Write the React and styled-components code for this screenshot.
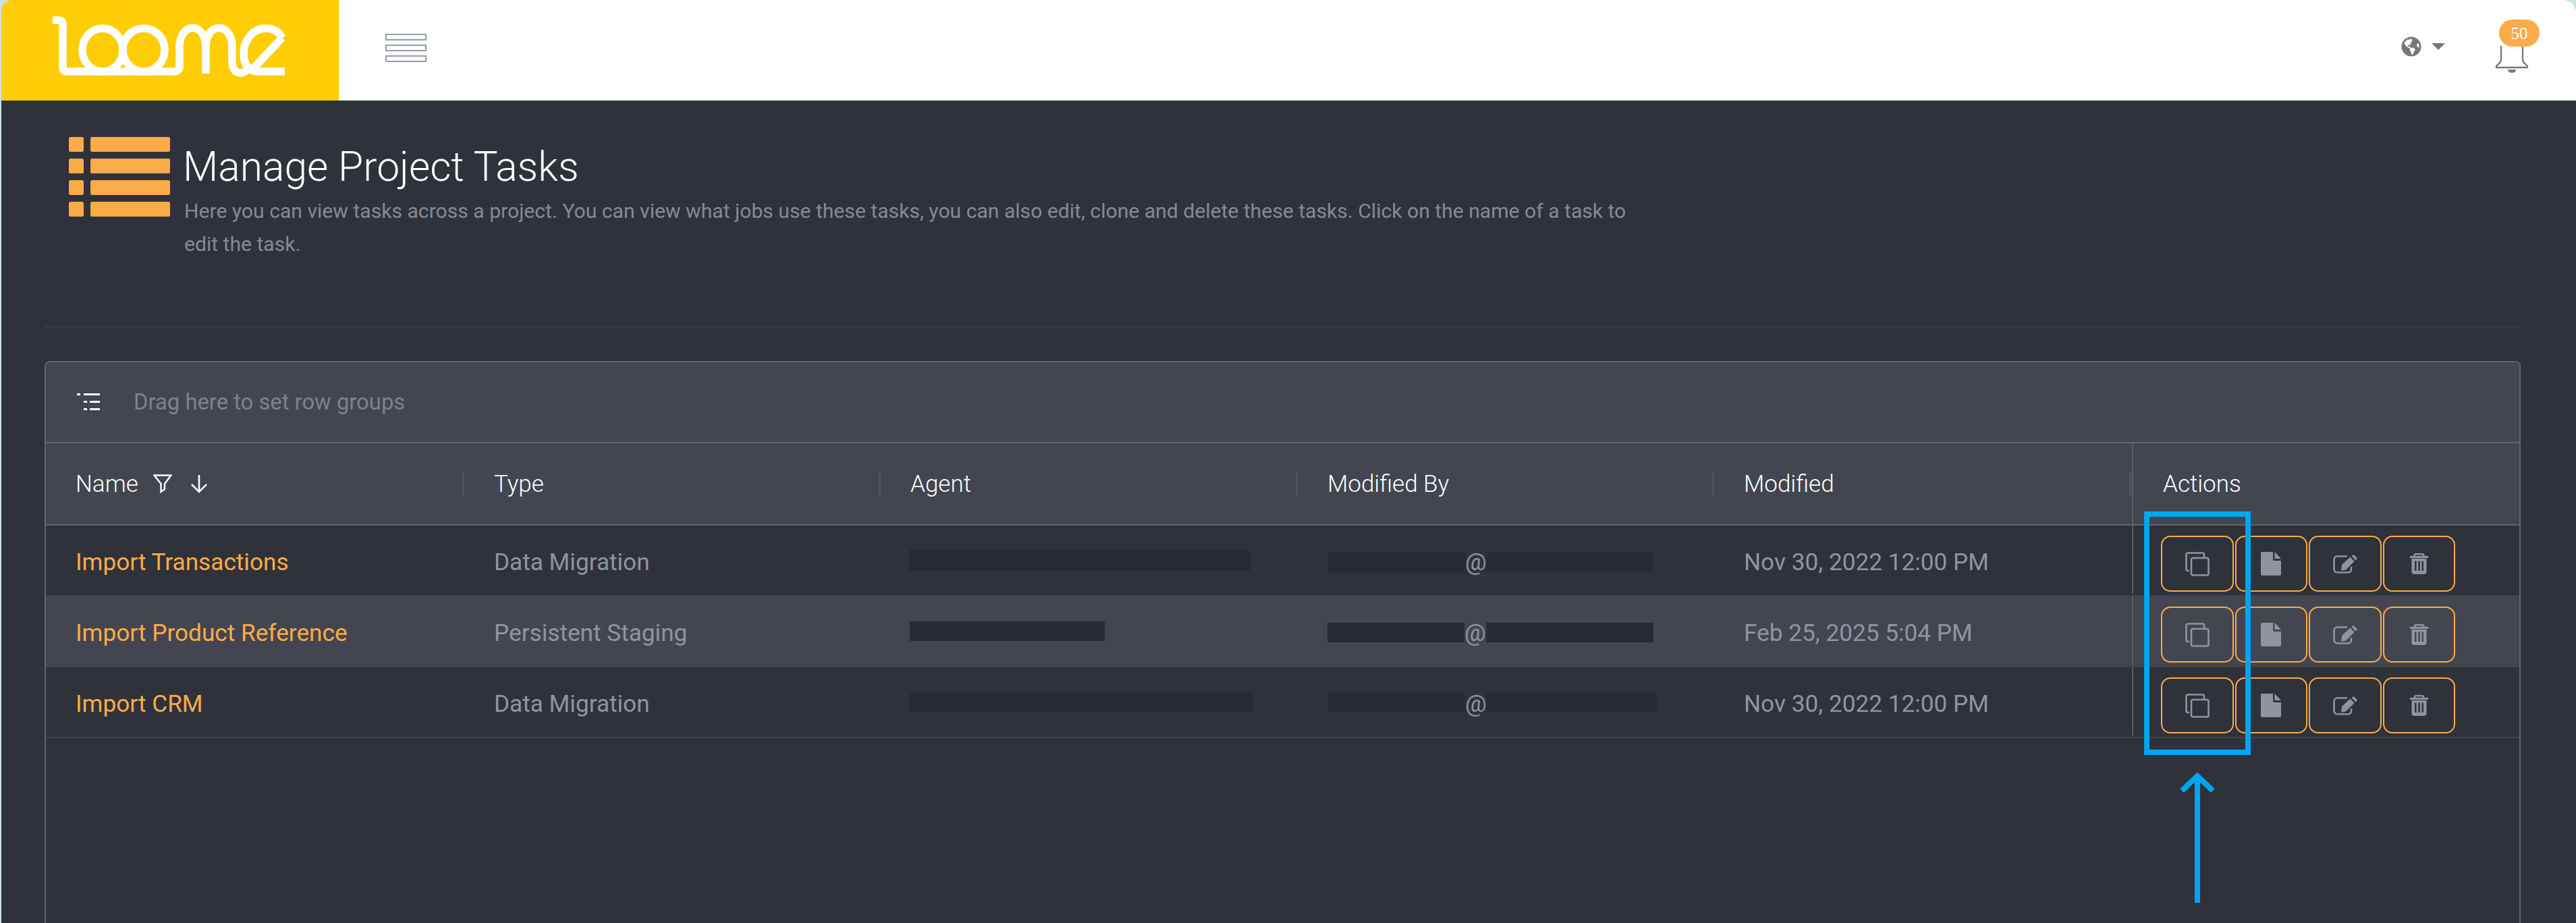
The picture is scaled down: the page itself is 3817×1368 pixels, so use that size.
import React from 'react'
import styled, { createGlobalStyle } from 'styled-components'
import { FaGlobeAmericas } from 'react-icons/fa'

const orange = '#fbab47'
const iconGrey = '#8f959e'
const dark = '#2f323b'
const light = '#434650'
const redact = '#282b33'

const GlobalStyle = createGlobalStyle`
  html, body {
    margin: 0;
    padding: 0;
    background: #c9e2ea;
  }
  * {
    box-sizing: border-box;
  }
`

const Page = styled.div`
  position: relative;
  width: 3817px;
  height: 1368px;
  overflow: hidden;
  padding-left: 2px;
  font-family: Roboto, 'Liberation Sans', sans-serif;
`

const Shell = styled.div`
  height: 100%;
  background: ${dark};
  border-radius: 16px 16px 0 0;
  overflow: hidden;
`

const TopBar = styled.header`
  display: flex;
  align-items: center;
  height: 149px;
  background: #fff;
`

const LogoBox = styled.div`
  display: flex;
  align-items: flex-start;
  width: 500px;
  height: 100%;
  padding: 24px 0 0 75px;
  background: #ffcd05;
`

const MenuButton = styled.div`
  display: flex;
  flex-direction: column;
  gap: 6px;
  margin: -7px 0 0 69px;
`

const MenuBar = styled.span`
  display: block;
  width: 61px;
  height: 10px;
  border: 2px solid #959ca6;
  background: #fff;
`

const TopActions = styled.div`
  display: flex;
  align-items: center;
  margin-left: auto;
  padding-right: 71px;
`

const LangMenu = styled.div`
  display: flex;
  align-items: center;
  gap: 15px;
  margin-top: -11px;
  color: #777;
  font-size: 30px;
`

const Caret = styled.span`
  width: 0;
  height: 0;
  border-left: 10px solid transparent;
  border-right: 10px solid transparent;
  border-top: 10px solid #777;
`

const Bell = styled.div`
  position: relative;
  width: 48px;
  height: 50px;
  margin: 21px 0 0 75px;
`

const Badge = styled.span`
  position: absolute;
  left: 5px;
  top: -31px;
  width: 60px;
  height: 40px;
  border-radius: 20px;
  background: ${orange};
  color: #fff;
  font-family: 'Liberation Serif', serif;
  font-size: 25px;
  line-height: 41px;
  text-align: center;
`

const Content = styled.main`
  padding: 54px 82px 0 64px;
`

const PageHead = styled.div`
  display: flex;
  gap: 21px;
  padding: 0 0 0 36px;
  height: 282px;
  border-bottom: 2px solid #3a3d49;
`

const HeadText = styled.div`
  padding-top: 10px;
`

const Title = styled.h1`
  margin: 0 0 0 -2px;
  color: #fff;
  font-size: 60.5px;
  font-weight: 300;
  line-height: 70px;
`

const Description = styled.p`
  width: 2170px;
  margin: 5px 0 0;
  color: #858a93;
  font-size: 30.13px;
  font-weight: 400;
  line-height: 49px;
`

const Panel = styled.section`
  height: 900px;
  margin-top: 50px;
  border: 2px solid #64636b;
  border-radius: 8px 8px 0 0;
`

const GroupBar = styled.div`
  display: flex;
  align-items: center;
  gap: 50px;
  height: 120px;
  padding-left: 46px;
  background: ${light};
  border-bottom: 2px solid #64636b;
  border-radius: 6px 6px 0 0;
  color: #7d828a;
  font-size: 32.8px;
  font-weight: 400;
`

const Columns = styled.div`
  display: grid;
  grid-template-columns: 618px 617px 618px 617px 621px 1fr;
`

const HeaderRow = styled(Columns)`
  height: 122px;
  background: ${light};
  border-bottom: 2px solid #64636b;
`

const HeadCell = styled.div`
  display: flex;
  align-items: center;
  padding-left: ${p => (p.$first ? '44px' : '0')};
  border-left: ${p => (p.$pinned ? '2px solid #5c5c63' : 'none')};
  color: #fff;
  font-size: 35px;
  font-weight: 300;
`

const Grip = styled.span`
  width: 3px;
  height: 36px;
  margin-right: ${p => (p.$end ? '1px' : '44px')};
  margin-left: ${p => (p.$end ? 'auto' : '-1px')};
  background: #50525a;
`

const PinnedLabel = styled.span`
  padding-left: 44px;
`

const Row = styled(Columns)`
  height: 105px;
  background: ${p => (p.$odd ? light : dark)};
  border-bottom: 2px solid #424247;
`

const Cell = styled.div`
  display: flex;
  align-items: center;
  padding-top: 4px;
  padding-left: ${p => (p.$first ? '44px' : '46px')};
  color: ${iconGrey};
  font-size: 35.2px;
  white-space: nowrap;
`

const NameLink = styled.a`
  color: ${orange};
`

const Redaction = styled.span`
  display: block;
  flex: none;
  width: ${p => p.$w}px;
  height: ${p => p.$h || 30}px;
  margin-top: ${p => p.$dy || 0}px;
  margin-left: ${p => p.$dx || 0}px;
  background: ${redact};
`

const ActionCell = styled.div`
  display: flex;
  align-items: flex-start;
  gap: 2px;
  padding: 15px 0 0 41px;
  border-left: 2px solid #5c5c63;
  margin-bottom: 2px;
`

const ActionButton = styled.button`
  display: flex;
  align-items: center;
  justify-content: center;
  width: 107.5px;
  height: 83px;
  padding: 0;
  background: transparent;
  border: 2px solid ${orange};
  border-radius: 14px;
`

const AnnotationBox = styled.div`
  position: absolute;
  left: 3177px;
  top: 758px;
  width: 158px;
  height: 361px;
  border: 8px solid #00a6ec;
`

const AnnotationArrow = styled.svg`
  position: absolute;
  left: 3226px;
  top: 1140px;
`

const Logo = () => (
  <svg width="350" height="92" viewBox="77 26 350 92" fill="none" stroke="#fff" strokeWidth="11.5">
    <path d="M78 32 H87 Q93 32 93 39 V102 Q93 108 99 108 H258 Q266 108 266 100 V72 C266 34 305 34 305 72 V111" />
    <ellipse cx="152" cy="76" rx="30" ry="32" />
    <ellipse cx="213" cy="76" rx="31" ry="32" />
    <path d="M305 72 C305 34 344 34 344 72 V94 C344 112 360 114 368 104" />
    <path d="M418 58 C412 46 402 44 394 44 C374 44 361 62 361 82 C361 96 368 108 382 108 H422" strokeLinejoin="round" />
    <path d="M418 58 L373 106" />
  </svg>
)

const BellIcon = () => (
  <svg width="48" height="50" viewBox="0 0 48 50" fill="none">
    <path d="M8 8 V28 Q8 32 5 34 L1 38 V40 H47 V38 L43 34 Q40 32 40 28 V8" stroke="#757b83" strokeWidth="2.4" />
    <path d="M18 43 H30 A6 5 0 0 1 18 43 Z" fill="#757b83" />
  </svg>
)

const ListIcon = () => (
  <svg width="150" height="118" viewBox="0 0 150 118" fill={orange}>
    {[0, 32, 64, 96].map(y => (
      <g key={y}>
        <rect x="0" y={y} width="22" height="22" rx="2.5" />
        <rect x="32" y={y} width="118" height="22" rx="2.5" />
      </g>
    ))}
  </svg>
)

const GroupIcon = () => (
  <svg width="34" height="26" viewBox="0 0 34 26" fill="#fff">
    <rect x="0" y="0" width="5" height="3" />
    <rect x="10" y="0" width="24" height="3" />
    <rect x="10" y="11" width="5" height="3" />
    <rect x="19" y="11" width="15" height="3" />
    <rect x="10" y="22" width="5" height="3" />
    <rect x="19" y="22" width="15" height="3" />
  </svg>
)

const FilterIcon = () => (
  <svg width="28" height="28" viewBox="0 0 28 28" fill="none" stroke="#fff" strokeWidth="2.4" style={{ margin: '0 26px 0 22px' }}>
    <path d="M1.5 1.5 H26.5 L17 14 V22 L11.5 26 V14 Z" />
  </svg>
)

const SortIcon = () => (
  <svg width="28" height="28" viewBox="0 0 28 28" fill="none" stroke="#fff" strokeWidth="2.6">
    <path d="M14 1 V26 M3 15 L14 26 L25 15" />
  </svg>
)

const CopyIcon = () => (
  <svg width="36" height="36" viewBox="0 0 36 36" fill="none" stroke={iconGrey} strokeWidth="2.6">
    <path d="M6 28 H4 Q1.5 28 1.5 25.5 V4 Q1.5 1.5 4 1.5 H25.5 Q28 1.5 28 4 V8.5" />
    <rect x="9" y="9" width="25.5" height="25.5" rx="2.5" />
  </svg>
)

const FileIcon = () => (
  <svg width="30" height="35" viewBox="0 0 30 35" fill={iconGrey}>
    <path d="M2 0 H18 V11 Q18 13 20 13 H30 V33 Q30 35 28 35 H2 Q0 35 0 33 V2 Q0 0 2 0 Z" />
    <path d="M20.5 0 L30 10 H20.5 Z" />
  </svg>
)

const EditIcon = () => (
  <svg width="36" height="28" viewBox="0 0 36 28" fill={iconGrey}>
    <path d="M21 2.5 H7 Q1.5 2.5 1.5 8 V21 Q1.5 26.5 7 26.5 H22 Q27 26.5 27 21 V18" fill="none" stroke={iconGrey} strokeWidth="2.6" />
    <path d="M13 15 L25.5 3.5 L31.5 10 L19 22.5 L12 24 Z" />
    <path d="M27.5 2 L29.5 0.5 Q30.5 0 31.5 1 L35.5 5 Q36 6 35 7 L33.5 8.5 Z" />
  </svg>
)

const TrashIcon = () => (
  <svg width="27" height="31" viewBox="0 0 27 31" fill={iconGrey}>
    <path d="M5.5 4 V3 Q5.5 0 9 0 H18 Q21.5 0 21.5 3 V4 H27 V7 H0 V4 Z M8 4 H19 V3.4 Q19 2.4 18 2.4 H9 Q8 2.4 8 3.4 Z" fillRule="evenodd" />
    <path d="M2.5 8 H24.5 V27 Q24.5 31 20.5 31 H6.5 Q2.5 31 2.5 27 Z M7 11.5 V26 H9.5 V11.5 Z M12.2 11.5 V26 H14.8 V11.5 Z M17.5 11.5 V26 H20 V11.5 Z" fillRule="evenodd" />
  </svg>
)

const rows = [
  {
    name: 'Import Transactions',
    type: 'Data Migration',
    agent: { w: 506, h: 31, dy: -5, dx: -2 },
    user: [{ w: 204, h: 31, dy: 1 }, { w: 247, h: 30, dy: -2 }],
    modified: 'Nov 30, 2022 12:00 PM',
  },
  {
    name: 'Import Product Reference',
    type: 'Persistent Staging',
    agent: { w: 289, h: 29, dy: -5, dx: -1 },
    user: [{ w: 203, h: 29, dy: -1 }, { w: 248, h: 29, dy: -1 }],
    modified: 'Feb 25, 2025 5:04 PM',
  },
  {
    name: 'Import CRM',
    type: 'Data Migration',
    agent: { w: 510, h: 29, dy: -5, dx: -1 },
    user: [{ w: 204, h: 29, dy: -5 }, { w: 252, h: 29, dy: -5 }],
    modified: 'Nov 30, 2022 12:00 PM',
  },
]

const App = () => (
  <Page>
    <GlobalStyle />
    <Shell>
      <TopBar>
        <LogoBox>
          <Logo />
        </LogoBox>
        <MenuButton>
          <MenuBar />
          <MenuBar />
          <MenuBar />
        </MenuButton>
        <TopActions>
          <LangMenu>
            <FaGlobeAmericas />
            <Caret />
          </LangMenu>
          <Bell>
            <BellIcon />
            <Badge>50</Badge>
          </Bell>
        </TopActions>
      </TopBar>
      <Content>
        <PageHead>
          <ListIcon />
          <HeadText>
            <Title>Manage Project Tasks</Title>
            <Description>
              Here you can view tasks across a project. You can view what jobs use these tasks, you can also edit, clone and delete these tasks. Click on the name of a task to edit the task.
            </Description>
          </HeadText>
        </PageHead>
        <Panel>
          <GroupBar>
            <GroupIcon />
            Drag here to set row groups
          </GroupBar>
          <HeaderRow>
            <HeadCell $first>
              Name
              <FilterIcon />
              <SortIcon />
            </HeadCell>
            <HeadCell><Grip />Type</HeadCell>
            <HeadCell><Grip />Agent</HeadCell>
            <HeadCell><Grip />Modified By</HeadCell>
            <HeadCell><Grip />Modified<Grip $end /></HeadCell>
            <HeadCell $pinned><PinnedLabel>Actions</PinnedLabel></HeadCell>
          </HeaderRow>
          {rows.map((row, i) => (
            <Row key={row.name} $odd={i % 2 === 1}>
              <Cell $first><NameLink>{row.name}</NameLink></Cell>
              <Cell>{row.type}</Cell>
              <Cell>
                <Redaction $w={row.agent.w} $h={row.agent.h} $dy={row.agent.dy} $dx={row.agent.dx} />
              </Cell>
              <Cell>
                <Redaction $w={row.user[0].w} $h={row.user[0].h} $dy={row.user[0].dy} />
                @
                <Redaction $w={row.user[1].w} $h={row.user[1].h} $dy={row.user[1].dy} />
              </Cell>
              <Cell>{row.modified}</Cell>
              <ActionCell>
                <ActionButton><CopyIcon /></ActionButton>
                <ActionButton><FileIcon /></ActionButton>
                <ActionButton><EditIcon /></ActionButton>
                <ActionButton><TrashIcon /></ActionButton>
              </ActionCell>
            </Row>
          ))}
        </Panel>
      </Content>
    </Shell>
    <AnnotationBox />
    <AnnotationArrow width="60" height="200" viewBox="0 0 60 200" fill="none" stroke="#00a6ec" strokeWidth="8">
      <path d="M30 10 V198 M7 32 L30 10 L53 32" />
    </AnnotationArrow>
  </Page>
)

export default App
